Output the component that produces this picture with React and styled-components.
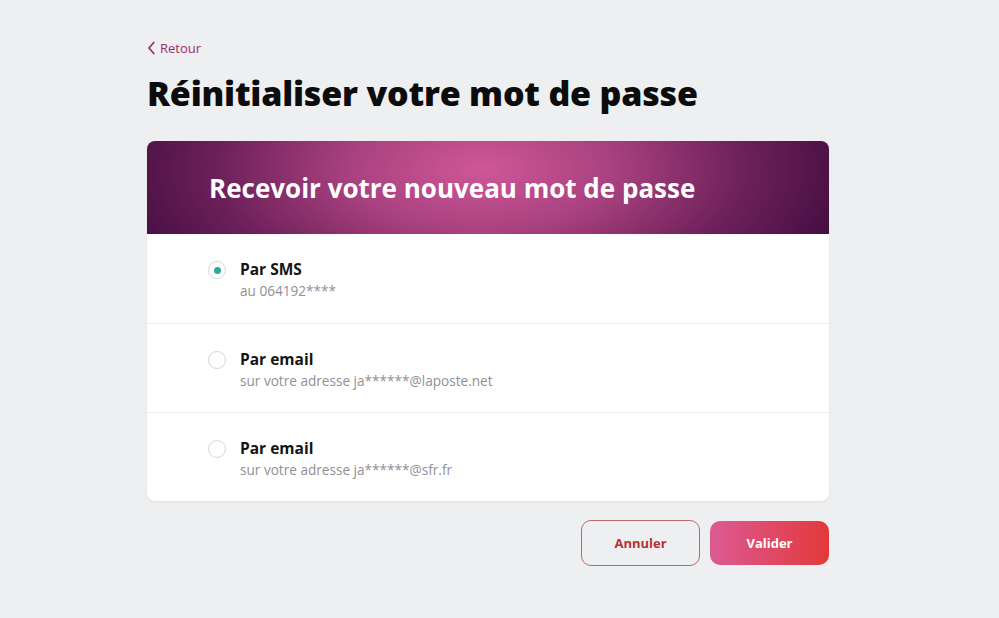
import React, { Component } from 'react';
import styled, { createGlobalStyle } from 'styled-components';

const GlobalStyle = createGlobalStyle`
  body {
    margin: 0;
    background: #eeeff1;
    font-family: "Open Sans", "Lato", sans-serif;
  }
`;

const Page = styled.div`
  width: 682px;
  padding: 38px 0 0 147px;
`;

const BackLink = styled.a`
  display: inline-flex;
  align-items: center;
  gap: 4px;
  color: #9b2c70;
  font-size: 13px;
  text-decoration: none;
  cursor: pointer;
  height: 18px;
`;

const Title = styled.h1`
  margin: 11px 0 26px;
  font-size: 34px;
  font-weight: 800;
  letter-spacing: -0.2px;
  color: #0c0c0c;
  line-height: 44px;
`;

const Card = styled.div`
  background: #fff;
  border-radius: 8px;
  overflow: hidden;
  box-shadow: 0 1px 3px rgba(0, 0, 0, 0.05);
`;

const CardHeader = styled.div`
  height: 93px;
  display: flex;
  align-items: center;
  padding-left: 62px;
  background: radial-gradient(ellipse 400px 190px at 49% 30%, #cf5798 0%, #aa4280 32%, #6d205a 66%, #3a0a3c 100%);
`;

const CardTitle = styled.h2`
  margin: 0;
  color: #fff;
  font-size: 26px;
  font-weight: 700;
  letter-spacing: 0;
`;

const Option = styled.label`
  display: flex;
  align-items: flex-start;
  gap: 14px;
  height: 89px;
  box-sizing: border-box;
  padding: 24px 0 0 61px;
  border-top: ${p => (p.first ? 'none' : '1px solid #ececec')};
  cursor: pointer;
`;

const Radio = styled.span`
  width: 18px;
  height: 18px;
  margin-top: 3px;
  border-radius: 50%;
  border: 1px solid #d7d7d7;
  box-sizing: border-box;
  display: flex;
  align-items: center;
  justify-content: center;
  flex-shrink: 0;
  &::after {
    content: '';
    width: 7px;
    height: 7px;
    border-radius: 50%;
    background: ${p => (p.checked ? '#2fa9a0' : 'transparent')};
  }
`;

const OptionText = styled.div`
  display: flex;
  flex-direction: column;
  gap: 1px;
`;

const OptionLabel = styled.span`
  font-size: 15.5px;
  font-weight: 700;
  color: #141414;
  line-height: 22px;
`;

const OptionSub = styled.span`
  font-size: 13.6px;
  color: #909096;
  line-height: 20px;
`;

const Actions = styled.div`
  display: flex;
  justify-content: flex-end;
  gap: 10px;
  margin-top: 19px;
`;

const Button = styled.button`
  width: 119px;
  height: ${p => (p.primary ? '44px' : '46px')};
  margin-top: ${p => (p.primary ? '1px' : '0')};
  border-radius: 10px;
  font-family: inherit;
  font-size: 13px;
  font-weight: 700;
  cursor: pointer;
  border: ${p => (p.primary ? 'none' : '1px solid #b86a66')};
  color: ${p => (p.primary ? '#fff' : '#b8322d')};
  background: ${p => (p.primary ? 'linear-gradient(90deg, #dc5a94 0%, #e0465e 60%, #e23a3a 100%)' : 'transparent')};
`;

const options = [
  { id: 'sms', label: 'Par SMS', sub: 'au 064192****' },
  { id: 'mail1', label: 'Par email', sub: 'sur votre adresse ja******@laposte.net' },
  { id: 'mail2', label: 'Par email', sub: 'sur votre adresse ja******@sfr.fr' },
];

class App extends Component {
  state = {
    selected: 'sms',
  }

  pick = id => {
    this.setState({ selected: id })
  }

  render() {
    const { selected } = this.state
    return (
      <>
        <GlobalStyle />
        <Page>
          <BackLink>
            <svg width="9" height="14" viewBox="0 0 9 14" fill="none">
              <path d="M6.8 1.5 L2 7 L6.8 12.5" stroke="#9b2c70" strokeWidth="1.7" strokeLinecap="round" strokeLinejoin="round" />
            </svg>
            Retour
          </BackLink>
          <Title>Réinitialiser votre mot de passe</Title>
          <Card>
            <CardHeader>
              <CardTitle>Recevoir votre nouveau mot de passe</CardTitle>
            </CardHeader>
            {options.map((opt, i) => (
              <Option key={opt.id} first={i === 0} onClick={() => this.pick(opt.id)}>
                <Radio checked={selected === opt.id} />
                <OptionText>
                  <OptionLabel>{opt.label}</OptionLabel>
                  <OptionSub>{opt.sub}</OptionSub>
                </OptionText>
              </Option>
            ))}
          </Card>
          <Actions>
            <Button type="button">Annuler</Button>
            <Button type="button" primary>Valider</Button>
          </Actions>
        </Page>
      </>
    );
  }
}

export default App
